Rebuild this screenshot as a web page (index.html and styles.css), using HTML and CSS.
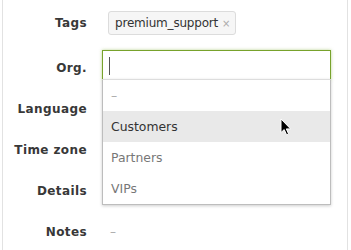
FILE: index.html
```html
<!DOCTYPE html>
<html>
<head>
    <link rel="stylesheet" href="styles.css">
</head>
<body>
  <div class="panel">
    <div class="row row-tags">
      <div class="label">Tags</div>
      <div class="value">
        <span class="tag">premium_support<span class="tag-x">×</span></span>
      </div>
    </div>
    <div class="row row-org">
      <div class="label">Org.</div>
      <div class="value">
        <div class="input"><span class="caret"></span></div>
        <ul class="dropdown">
          <li class="item empty">–</li>
          <li class="item active">Customers</li>
          <li class="item">Partners</li>
          <li class="item">VIPs</li>
        </ul>
      </div>
    </div>
    <div class="row">
      <div class="label">Language</div>
      <div class="value"></div>
    </div>
    <div class="row">
      <div class="label">Time zone</div>
      <div class="value"></div>
    </div>
    <div class="row">
      <div class="label">Details</div>
      <div class="value"></div>
    </div>
    <div class="row">
      <div class="label">Notes</div>
      <div class="value empty">–</div>
    </div>
    <!-- mouse pointer over the hovered option -->
    <svg class="pointer" width="12" height="18" viewBox="0 0 12 18">
      <polygon points="1,1 1,14.5 4.2,11.6 6.6,16.8 8.6,15.9 6.3,10.9 10.6,10.9" fill="#000" stroke="#fff" stroke-width="1"/>
    </svg>
  </div>
</body>
</html>
```
FILE: styles.css
```css
body {
    margin: 0;
    background: #fff;
    font-family: "DejaVu Sans", sans-serif;
    font-size: 12px;
    color: #333;
}

/* white sheet with thin side rules */
.panel {
    position: relative;
    margin: 0 3px 0 2px;
    border-left: 1px solid #e2e2e2;
    border-right: 1px solid #e2e2e2;
    height: 250px;
    padding-top: 3px;
    box-sizing: border-box;
}

.row {
    display: flex;
    height: 41px;
    line-height: 41px;
}

.row-tags {
    align-items: center;
    margin-bottom: 4px;
}

.label {
    width: 84px;
    flex: none;
    text-align: right;
    font-weight: bold;
    letter-spacing: 0.4px;
    color: #383838;
}

.value {
    position: relative;
    margin-left: 15px;
    width: 229px;
}

.empty {
    color: #aaa;
    padding-left: 8px;
}

/* tag chip */
.tag {
    display: inline-block;
    margin-left: 6px;
    height: 22px;
    line-height: 22px;
    padding: 0 5px 0 6px;
    background: #f6f6f6;
    border: 1px solid #dcdcdc;
    border-radius: 3px;
    color: #333;
    letter-spacing: -0.2px;
}

.tag-x {
    margin-left: 4px;
    font-size: 10px;
    color: #aaa;
}

/* focused input */
.input {
    margin-top: 2px;
    height: 28px;
    border: 1px solid #78a22c;
    box-shadow: 0 0 3px rgba(120, 170, 40, 0.5);
    background: #fff;
    position: relative;
}

.caret {
    position: absolute;
    left: 6px;
    top: 6px;
    width: 1px;
    height: 18px;
    background: #555;
}

/* option list under the input */
.dropdown {
    position: absolute;
    top: 31px;
    left: 0;
    width: 227px;
    margin: 0;
    padding: 0;
    list-style: none;
    background: #fff;
    border: 1px solid #bdbdbd;
    border-top-color: #ddd;
    box-shadow: 0 1px 3px rgba(0, 0, 0, 0.2);
    z-index: 5;
}

.item {
    height: 31px;
    line-height: 31px;
    padding-left: 8px;
    font-size: 12.4px;
    color: #777;
}

.item.active {
    background: #e9e9e9;
    color: #333;
}

.item.empty {
    color: #aaa;
}

.pointer {
    position: absolute;
    left: 277px;
    top: 118px;
    z-index: 10;
}
```
